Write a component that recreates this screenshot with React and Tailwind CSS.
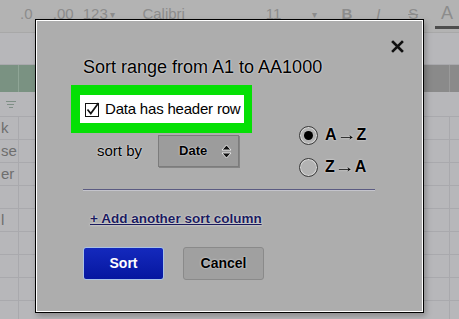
import React from 'react';

const halo = '[text-shadow:0_0_2px_rgba(255,255,255,0.9)]';

// faded spreadsheet rows peeking out behind the dialog
const rows = ['k', 'se', 'er', '', 'l', '', '', '', ''];

const CloseIcon = () => (
  <svg width="13" height="13" viewBox="0 0 13 13" aria-hidden="true">
    <path d="M2 2 L11 11 M11 2 L2 11" stroke="#111" strokeWidth="2.6" strokeLinecap="square" />
  </svg>
);

const CheckIcon = () => (
  <svg width="15" height="15" viewBox="0 0 15 15" aria-hidden="true">
    <rect x="0.5" y="1.5" width="13" height="13" fill="#fff" stroke="#111" />
    <path d="M2.5 7.5 L5.8 11.5 L13.5 1" fill="none" stroke="#111" strokeWidth="1.7" />
  </svg>
);

const UpDownIcon = () => (
  <svg width="11" height="15" viewBox="0 0 11 15" aria-hidden="true">
    <path d="M5.5 1 L10 6 L1 6 Z M5.5 14 L10 9 L1 9 Z" fill="#111" stroke="#fff" strokeWidth="0.8" />
  </svg>
);

const Radio = ({ checked, from, to }) => (
  <div className="flex items-center h-[18px]">
    <div className="w-[19px] h-[19px] rounded-full border border-[#3a3a3a] bg-[#b3b3b3] shadow-[inset_0_0_0_1px_#d8d8d8] flex items-center justify-center">
      {checked && <div className="w-[9px] h-[9px] rounded-full bg-black" />}
    </div>
    <span className={`ml-[7px] flex items-center text-[16px] font-bold text-black ${halo}`}>
      {from}
      <span className="mx-[2px] font-normal scale-x-125">→</span>
      {to}
    </span>
  </div>
);

const App = () => {
  return (
    <div className="relative w-[459px] h-[319px] overflow-hidden bg-[#b7b7ba] font-['Liberation_Sans',Arial,sans-serif]">
      {/* Toolbar behind the dialog */}
      <div className="h-[33px] bg-[#b3b3b3] border-b border-[#a8a8a8] flex items-start pt-[3px] pl-[20px] text-[15px] text-[#8c8c8c]">
        <span className="w-[33px]">.0</span>
        <span className="w-[30px]">.00</span>
        <span className="w-[27px]">123</span>
        <span className="w-[33px] text-[10px] mt-[4px]">▾</span>
        <span className="w-[124px]">Calibri</span>
        <span className="w-[46px]">11</span>
        <span className="w-[30px] text-[10px] mt-[4px]">▾</span>
        <span className="w-[35px] font-bold">B</span>
        <span className="w-[32px] italic">I</span>
        <span className="w-[27px] line-through">S</span>
        <div className="flex flex-col items-center">
          <span className="text-[18px] leading-[20px]">A</span>
          <div className="mt-[3px] w-[24px] h-[3px] bg-[#4d4d4d]" />
        </div>
      </div>
      <div className="h-[32px] border-b border-[#a9a9ad]" />

      {/* Header row */}
      <div className="h-[27px] flex">
        <div className="w-[19px] bg-[#7a9282] border-r border-[#8fa596]" />
        <div className="w-[200px] bg-[#7a9282]" />
        <div className="flex-1 bg-[#8a8a8a]" />
        <div className="w-[10px] bg-[#8a8a8a] border-l border-[#9a9a9a]" />
      </div>

      {/* Filter row */}
      <div className="h-[25px] flex items-center border-b border-[#a9a9ad]">
        <div className="w-[19px] flex flex-col items-center gap-[2px] pl-[2px]">
          <div className="w-[10px] h-px bg-[#7f8f86]" />
          <div className="w-[7px] h-px bg-[#7f8f86]" />
          <div className="w-[4px] h-px bg-[#7f8f86]" />
        </div>
      </div>

      {/* Cells */}
      {rows.map((t, i) => (
        <div key={i} className="h-[23px] flex border-b border-[#a9a9ad]">
          <div className="w-[19px] border-r border-[#a9a9ad] flex items-center pl-[1px] text-[15px] text-[#6e6e6e]">
            {t}
          </div>
          <div className="flex-1" />
          <div className="w-[10px] border-l border-[#a9a9ad]" />
        </div>
      ))}

      {/* Sort dialog */}
      <div className="absolute left-[35px] top-[19px] w-[389px] h-[294px] bg-[#adadad] border border-black shadow-[inset_0_0_0_1px_#fff,2px_3px_6px_rgba(0,0,0,0.25)]">
        <div className="flex flex-col pl-[47px] pt-[20px]">
          <div className="flex justify-end pr-[19px] h-[13px]">
            <CloseIcon />
          </div>

          <h2 className={`mt-[4px] text-[18px] leading-[20px] text-black ${halo}`}>
            Sort range from A1 to AA1000
          </h2>

          <div className="flex items-start mt-[8px]">
            <div className="ml-[-12px] flex flex-col">
              <div className="w-[181px] h-[48px] bg-[#05e005] pt-[10px] pl-[9px]">
                <label className="w-[164px] h-[28px] bg-white flex items-center pl-[5px] gap-[5px]">
                  <CheckIcon />
                  <span className="text-[15px] text-black whitespace-nowrap tracking-[-0.2px]">
                    Data has header row
                  </span>
                </label>
              </div>
              <div className="mt-[2px] flex items-center">
                <span className={`ml-[26px] text-[15px] text-black ${halo}`}>sort by</span>
                <div className="ml-[16px] w-[81px] h-[32px] bg-[#9c9c9c] border border-[#7c7c7c] shadow-[1px_1px_0_#858585] flex items-center justify-between pl-[20px] pr-[6px]">
                  <span className={`text-[13px] font-bold text-black ${halo}`}>Date</span>
                  <UpDownIcon />
                </div>
              </div>
            </div>

            <div className="ml-[47px] pt-[41px] flex flex-col gap-[14px]">
              <Radio checked from="A" to="Z" />
              <Radio from="Z" to="A" />
            </div>
          </div>

          <div className="mt-[13px] w-[292px] h-px bg-[#5b5b82] shadow-[0_1px_0_#c4c4cc]" />

          <a className={`mt-[21px] ml-[7px] self-start text-[13.5px] leading-[16px] font-bold text-[#1b1b5e] underline ${halo}`}>
            + Add another sort column
          </a>

          <div className="mt-[20px] flex gap-[19px]">
            <button className="w-[81px] h-[33px] rounded-[3px] border border-[#a9c2e6] bg-gradient-to-b from-[#1429bd] to-[#0616a0] text-white text-[14px] font-bold">
              Sort
            </button>
            <button className={`w-[81px] h-[33px] rounded-[3px] border border-[#8a8a8a] bg-[#a0a0a0] text-black text-[14px] font-bold ${halo}`}>
              Cancel
            </button>
          </div>
        </div>
      </div>
    </div>
  );
};

export default App;
